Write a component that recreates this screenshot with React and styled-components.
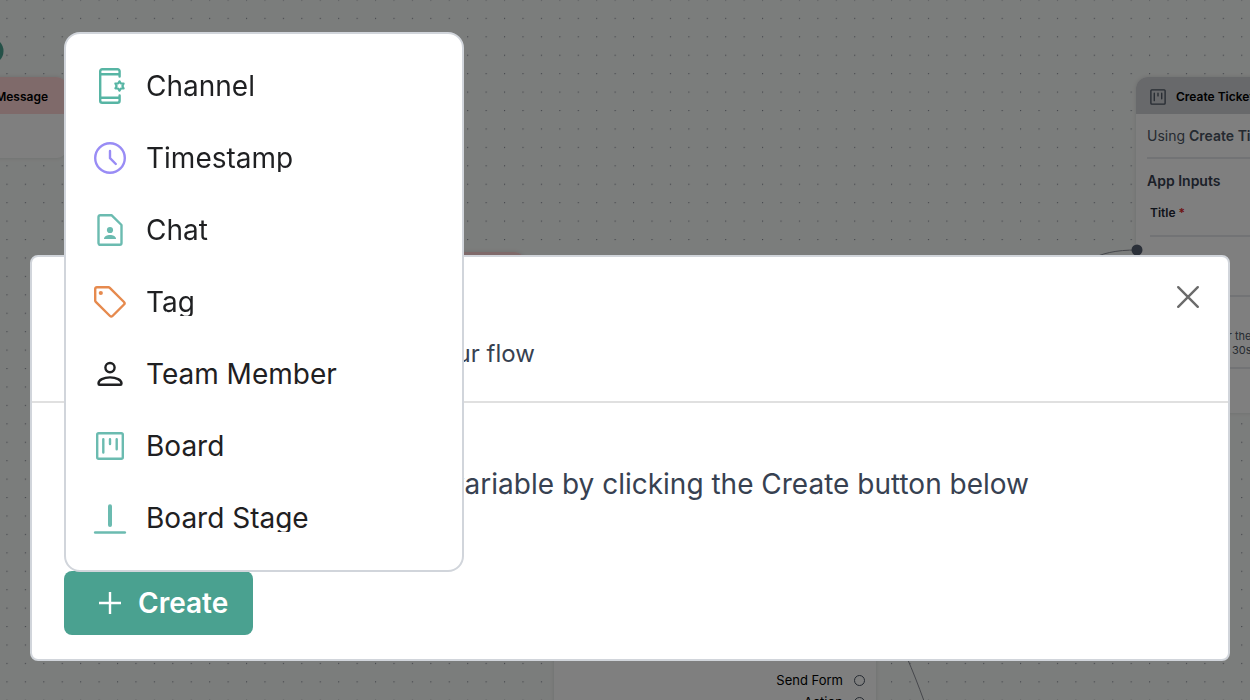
import React from "react";
import styled, { createGlobalStyle } from "styled-components";

const GlobalStyle = createGlobalStyle`
  *, *::before, *::after { box-sizing: border-box; }
  body { margin: 0; font-family: Inter, "Liberation Sans", sans-serif; color: #1f2022; }
  h2, h3, p { margin: 0; }
  button { font: inherit; cursor: pointer; }
`;

/* ---------- Flow canvas ---------- */

const Canvas = styled.main`
  position: relative;
  height: 100vh;
  overflow: hidden;
  background: #f7faf8;
`;

const CanvasDrawing = styled.svg`
  position: absolute;
  inset: 0;
  width: 100%;
  height: 100%;
`;

const Node = styled.section`
  position: absolute;
  left: ${(p) => p.$x}px;
  top: ${(p) => p.$y}px;
  width: ${(p) => p.$width}px;
  border-radius: 12px;
  background: #fff;
  box-shadow: 0 0 4px rgba(0, 0, 0, 0.12);
  font-size: 13px;
`;

const NodeHeader = styled.header`
  display: flex;
  align-items: center;
  justify-content: ${(p) => (p.$end ? "flex-end" : "flex-start")};
  gap: 8px;
  height: 37px;
  padding: 2px ${(p) => (p.$end ? 20 : 12)}px 0;
  border-radius: 12px 12px 0 0;
  background: ${(p) => p.$color};
  color: #000;
  font-size: 12px;
  font-weight: 600;
  white-space: nowrap;

  svg { color: #4b5563; }
`;

const NodeBody = styled.div`
  height: ${(p) => p.$height}px;
`;

const TicketBody = styled.div`
  display: flex;
  flex-direction: column;
  padding: 0 11px 44px;
  white-space: nowrap;
`;

const TicketAction = styled.p`
  padding: 12px 0 11px;
  border-bottom: 2px solid #e5e7eb;
  color: #4b5563;
  font-size: 14px;
  line-height: 20px;

  strong { font-weight: 600; }
`;

const TicketHeading = styled.h3`
  padding-top: 12px;
  color: #374151;
  font-size: 14px;
  line-height: 20px;
  font-weight: 600;
`;

const TicketField = styled.p`
  margin-left: 3px;
  padding: 12px 0;
  border-bottom: 2px solid #e5e7eb;
  color: #1f2937;
  font-size: 12px;
  line-height: 20px;
  font-weight: 600;

  span { color: #dc2626; }
`;

const TicketValue = styled.div`
  height: 60px;
  margin-left: 3px;
  border-bottom: 2px solid #e5e7eb;
`;

const TicketNote = styled.p`
  margin-left: 3px;
  padding: 32px 0 10px;
  border-bottom: 2px solid #e5e7eb;
  color: #4b5563;
  font-size: 11px;
  line-height: 14px;
`;

const OutputList = styled.ul`
  display: flex;
  flex-direction: column;
  gap: 2px;
  margin: 0;
  padding: 150px 11px 16px;
  list-style: none;
  color: #000;
  font-size: 13px;
  line-height: 20px;
`;

const Output = styled.li`
  display: flex;
  align-items: center;
  justify-content: flex-end;
  gap: 11px;

  &::after {
    content: "";
    width: 11px;
    height: 11px;
    border: 1px solid #4b5563;
    border-radius: 50%;
  }
`;

/* ---------- Dialog ---------- */

const Backdrop = styled.div`
  position: fixed;
  inset: 0;
  display: flex;
  flex-direction: column;
  justify-content: flex-end;
  padding: 0 20px 39px 30px;
  background: rgba(0, 0, 0, 0.5);
`;

const Dialog = styled.div`
  border: 2px solid #d1d5db;
  border-radius: 8px;
  background: #fff;
  color: #374151;
`;

const DialogHeader = styled.header`
  display: flex;
  align-items: flex-start;
  justify-content: space-between;
  padding: 24px 24px 31px 32px;
  border-bottom: 2px solid #e0e0e0;
`;

const DialogHeading = styled.div`
  display: flex;
  flex-direction: column;
  gap: 17px;
`;

const DialogTitle = styled.h2`
  font-size: 32px;
  line-height: 40px;
  font-weight: 600;
`;

const DialogSubtitle = styled.p`
  font-size: 24px;
  line-height: 32px;
`;

const CloseButton = styled.button`
  display: flex;
  padding: 4px;
  border: 0;
  background: none;
  color: #6b6b6b;
`;

const DialogBody = styled.div`
  display: flex;
  flex-direction: column;
  gap: 69px;
  padding: 63px 32px 24px;
`;

const EmptyText = styled.p`
  font-size: 28px;
  line-height: 36px;
  text-align: center;
`;

const CreateGroup = styled.div`
  position: relative;
  display: flex;
`;

const CreateButton = styled.button`
  display: flex;
  align-items: center;
  gap: 16px;
  height: 64px;
  padding: 0 25px 0 34px;
  border: 0;
  border-radius: 8px;
  background: #4aa190;
  color: #fff;
  font-size: 28px;
  font-weight: 600;
`;

const Menu = styled.div`
  position: absolute;
  left: 0;
  bottom: 63px;
  width: 400px;
  padding: 16px 0;
  border: 2px solid #d1d5db;
  border-radius: 16px;
  background: #fff;
`;

const MenuItem = styled.button`
  display: flex;
  align-items: center;
  gap: 18px;
  width: 100%;
  height: 72px;
  padding: 0 26px;
  border: 0;
  background: none;
  color: #1f2022;
  text-align: left;

  svg { flex: none; color: ${(p) => p.$color}; }
`;

const MenuLabel = styled.span`
  overflow: hidden;
  font-size: 28px;
  line-height: 28px;
  white-space: nowrap;
`;

/* ---------- Icons ---------- */

const Icon = ({ size = 36, box = 36, stroke = 2.4, children }) => (
  <svg
    width={size}
    height={size}
    viewBox={`0 0 ${box} ${box}`}
    fill="none"
    stroke="currentColor"
    strokeWidth={stroke}
    strokeLinecap="round"
    strokeLinejoin="round"
    aria-hidden="true"
  >
    {children}
  </svg>
);

const ChannelIcon = () => (
  <Icon>
    <path d="M27.600 8.500V3.200a2 2 0 0 0-2-2H10.200a2 2 0 0 0-2 2v29.600a2 2 0 0 0 2 2h15.400a2 2 0 0 0 2-2v-5.300M8.200 6.300h19.400M8.200 29.700h19.400" />
    <path
      strokeWidth="2.200"
      d="M27.500 13.300L28.900 15.500L31.600 15.600L30.400 18L31.600 20.400L28.900 20.500L27.500 22.700L26.100 20.500L23.400 20.400L24.600 18L23.400 15.600L26.100 15.500Z"
    />
  </Icon>
);

const ClockIcon = () => (
  <Icon>
    <circle cx="18" cy="18" r="14.800" />
    <path d="M18 11V18.200L23.800 24" />
  </Icon>
);

const ChatIcon = () => (
  <Icon>
    <path d="M8.200 3.200H19.500L29.500 13V31.100a1.700 1.700 0 0 1-1.700 1.700H8.200a1.700 1.700 0 0 1-1.700-1.700V4.900A1.700 1.700 0 0 1 8.200 3.200Z" />
    <circle cx="18" cy="18" r="3.100" fill="currentColor" stroke="none" />
    <path d="M12 27C12 24.400 15 23 18 23s6 1.400 6 4Z" fill="currentColor" stroke="none" />
  </Icon>
);

const TagIcon = () => (
  <Icon>
    <path d="M4.900 3.200H16.400a2 2 0 0 1 1.400.600L32 18a1.800 1.800 0 0 1 0 2.500L20.500 32a1.800 1.800 0 0 1-2.500 0L3.800 17.800a2 2 0 0 1-.600-1.400V4.900A1.700 1.700 0 0 1 4.900 3.200Z" />
    <circle cx="8.800" cy="9" r="2.100" fill="currentColor" stroke="none" />
  </Icon>
);

const PersonIcon = () => (
  <Icon>
    <circle cx="18" cy="11.600" r="4.600" />
    <path d="M7.700 28.800C6.800 28.800 6.500 28.300 6.500 27.500C6.500 23.900 11.600 21.400 18 21.400S29.500 23.900 29.500 27.500C29.500 28.300 29.200 28.800 28.300 28.800Z" />
  </Icon>
);

const BoardIcon = ({ size = 36 }) => (
  <Icon size={size}>
    <rect x="5.200" y="5.200" width="25.600" height="25.600" rx="1.500" />
    <path d="M11.300 11.300V24.600M18 11.300V16M24.700 11.300V21.300" />
  </Icon>
);

const StageIcon = () => (
  <Icon>
    <path d="M18 6.300V25" strokeWidth="4" />
    <path d="M3.200 32.500H32.800" strokeWidth="2.600" />
  </Icon>
);

const PlusIcon = () => (
  <Icon size={24} box={24}>
    <path d="M12 1V23M1 12H23" strokeLinecap="butt" />
  </Icon>
);

const CloseIcon = () => (
  <Icon size={24} box={24}>
    <path d="M2.200 2.200L21.800 21.800M21.800 2.200L2.200 21.800" />
  </Icon>
);

const menuItems = [
  { label: "Channel", icon: ChannelIcon, color: "#57b5a4" },
  { label: "Timestamp", icon: ClockIcon, color: "#998cf5" },
  { label: "Chat", icon: ChatIcon, color: "#6bbbb0" },
  { label: "Tag", icon: TagIcon, color: "#e68a4e" },
  { label: "Team Member", icon: PersonIcon, color: "#1f2022" },
  { label: "Board", icon: BoardIcon, color: "#6bbbb0" },
  { label: "Board Stage", icon: StageIcon, color: "#6bbbb0" },
];

const FlowCanvas = () => (
  <Canvas>
    <CanvasDrawing aria-hidden="true">
      <defs>
        <pattern id="grid" x="6.400" y="-0.600" width="18.430" height="18.430" patternUnits="userSpaceOnUse">
          <circle cx="0.600" cy="0.600" r="0.600" fill="#6b7280" />
        </pattern>
      </defs>
      <rect width="100%" height="100%" fill="url(#grid)" />
      <circle cx="-10" cy="51" r="13.500" fill="#4aa391" />
      <path d="M1040 300C1080 262 1095 250 1137 250M858 560C888 620 903 640 929 715" fill="none" stroke="#8b8f98" />
    </CanvasDrawing>

    <Node $x={-254} $y={77} $width={322}>
      <NodeHeader $color="#ffd4d4" $end>Send Message</NodeHeader>
      <NodeBody $height={44} />
    </Node>

    <Node $x={204} $y={252} $width={322}>
      <NodeHeader $color="#ffd4d4" />
      <NodeBody $height={60} />
    </Node>

    <Node $x={554} $y={520} $width={322}>
      <OutputList>
        <Output>Send Form</Output>
        <Output>Action</Output>
      </OutputList>
    </Node>

    <Node $x={1136} $y={77} $width={322}>
      <NodeHeader $color="#d0d2d6">
        <BoardIcon size={20} />
        Create Ticket
      </NodeHeader>
      <TicketBody>
        <TicketAction>
          Using <strong>Create Ticket</strong>
        </TicketAction>
        <TicketHeading>App Inputs</TicketHeading>
        <TicketField>
          Title <span>*</span>
        </TicketField>
        <TicketValue />
        <TicketNote>
          Used as title for the ticket
          <br />
          and sent within 30s
        </TicketNote>
      </TicketBody>
    </Node>

    <CanvasDrawing aria-hidden="true">
      <circle cx="1137" cy="250" r="5.500" fill="#566072" />
    </CanvasDrawing>
  </Canvas>
);

export default function App() {
  return (
    <>
      <GlobalStyle />
      <FlowCanvas />
      <Backdrop>
        <Dialog role="dialog" aria-modal="true" aria-labelledby="dialog-title">
          <DialogHeader>
            <DialogHeading>
              <DialogTitle id="dialog-title">Variables</DialogTitle>
              <DialogSubtitle>Create and manage variables in your flow</DialogSubtitle>
            </DialogHeading>
            <CloseButton type="button" aria-label="Close">
              <CloseIcon />
            </CloseButton>
          </DialogHeader>
          <DialogBody>
            <EmptyText>Create a shared variable by clicking the Create button below</EmptyText>
            <CreateGroup>
              <CreateButton type="button" aria-haspopup="menu" aria-expanded="true">
                <PlusIcon />
                Create
              </CreateButton>
              <Menu role="menu">
                {menuItems.map(({ label, icon: ItemIcon, color }) => (
                  <MenuItem key={label} type="button" role="menuitem" $color={color}>
                    <ItemIcon />
                    <MenuLabel>{label}</MenuLabel>
                  </MenuItem>
                ))}
              </Menu>
            </CreateGroup>
          </DialogBody>
        </Dialog>
      </Backdrop>
    </>
  );
}
